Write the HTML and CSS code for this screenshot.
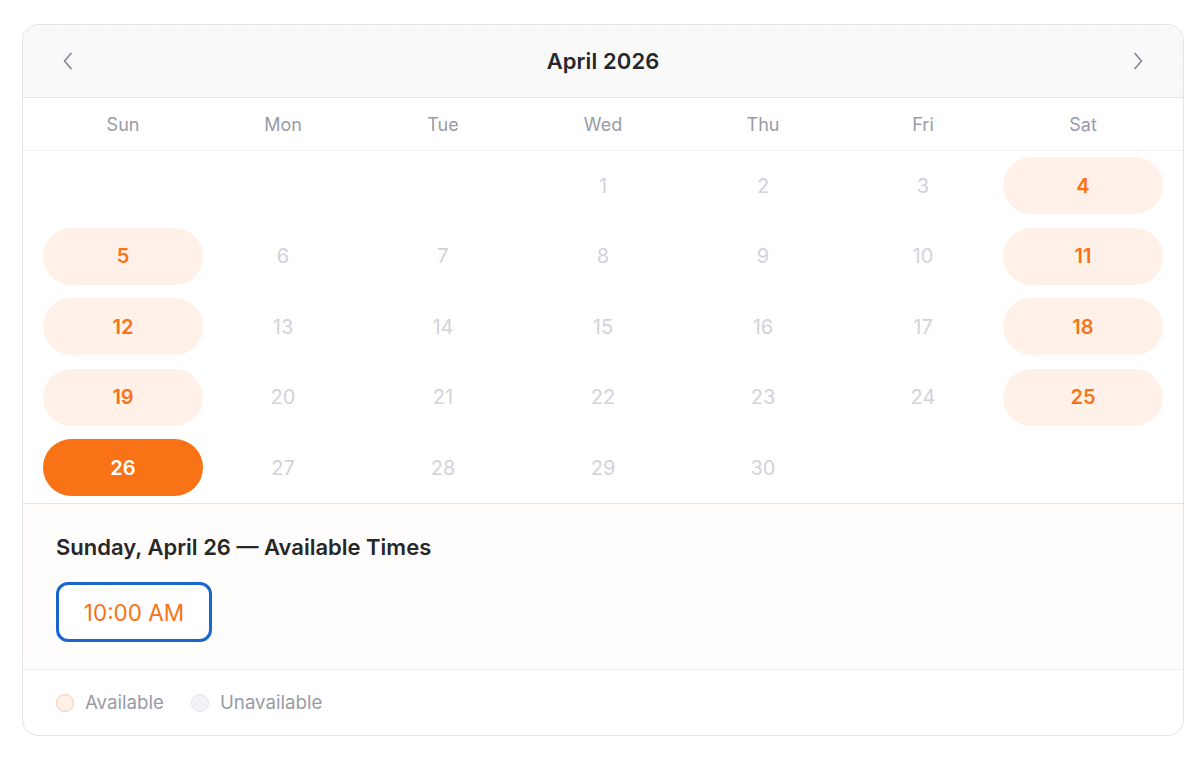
FILE: index.html
```html
<!DOCTYPE html>
<html lang="en">
<head>
<meta charset="utf-8">
<title>April 2026</title>
<link rel="stylesheet" href="styles.css">
</head>
<body>
<div class="card">
  <div class="header">
    <button class="nav" aria-label="Previous month">
      <svg width="16" height="20" viewBox="0 0 16 20"><path d="M11 2.5 L4.5 10 L11 17.5" fill="none" stroke="#8b8b96" stroke-width="1.8" stroke-linecap="round" stroke-linejoin="round"/></svg>
    </button>
    <div class="title">April 2026</div>
    <button class="nav" aria-label="Next month">
      <svg width="16" height="20" viewBox="0 0 16 20"><path d="M5 2.5 L11.5 10 L5 17.5" fill="none" stroke="#8b8b96" stroke-width="1.8" stroke-linecap="round" stroke-linejoin="round"/></svg>
    </button>
  </div>
  <div class="weekdays">
    <div>Sun</div><div>Mon</div><div>Tue</div><div>Wed</div><div>Thu</div><div>Fri</div><div>Sat</div>
  </div>
  <div class="grid">
    <div class="day empty"></div><div class="day empty"></div><div class="day empty"></div>
    <div class="day off">1</div><div class="day off">2</div><div class="day off">3</div><div class="day avail">4</div>
    <div class="day avail">5</div><div class="day off">6</div><div class="day off">7</div><div class="day off">8</div><div class="day off">9</div><div class="day off">10</div><div class="day avail">11</div>
    <div class="day avail">12</div><div class="day off">13</div><div class="day off">14</div><div class="day off">15</div><div class="day off">16</div><div class="day off">17</div><div class="day avail">18</div>
    <div class="day avail">19</div><div class="day off">20</div><div class="day off">21</div><div class="day off">22</div><div class="day off">23</div><div class="day off">24</div><div class="day avail">25</div>
    <div class="day selected">26</div><div class="day off">27</div><div class="day off">28</div><div class="day off">29</div><div class="day off">30</div><div class="day empty"></div><div class="day empty"></div>
  </div>
  <div class="times">
    <h2 class="times-title">Sunday, April 26 — Available Times</h2>
    <div class="slots">
      <button class="slot">10:00 AM</button>
    </div>
  </div>
  <div class="legend">
    <span class="legend-item"><span class="dot dot-avail"></span>Available</span>
    <span class="legend-item"><span class="dot dot-off"></span>Unavailable</span>
  </div>
</div>
</body>
</html>
```
FILE: styles.css
```css
* { box-sizing: border-box; }
html, body { margin: 0; background: #ffffff; }
body {
  padding: 24px 16px 0 22px;
  font-family: Inter, "Noto Sans", "Liberation Sans", sans-serif;
  color: #27272a;
}
.card {
  width: 1162px;
  border: 1px solid #e4e4e8;
  border-radius: 16px;
  overflow: hidden;
  background: #fff;
}
.header {
  height: 73px;
  display: flex;
  align-items: center;
  justify-content: space-between;
  padding: 0 33px;
  border-bottom: 1px solid #e4e4e8;
  background-color: #f9f9fa;
  background-image: radial-gradient(circle, #f2f2f4 0.7px, transparent 1.1px);
  background-size: 12px 12px;
}
.nav {
  width: 24px; height: 24px;
  border: 0; background: none; padding: 0;
  display: flex; align-items: center; justify-content: center;
}
.title {
  font-size: 22px;
  font-weight: 600;
  color: #27272a;
  letter-spacing: 0.1px;
}
.weekdays {
  display: grid;
  grid-template-columns: repeat(7, 160px);
  padding: 0 20px;
  height: 53px;
  align-items: center;
  border-bottom: 1px solid #f0f0f3;
  font-size: 18px;
  color: #9a9aa6;
  text-align: center;
}
.grid {
  display: grid;
  grid-template-columns: repeat(7, 160px);
  grid-auto-rows: 57px;
  row-gap: 13.5px;
  padding: 6px 20px 7px;
  border-bottom: 1px solid #e4e4e8;
}
.day {
  display: flex;
  align-items: center;
  justify-content: center;
  font-size: 20px;
  border-radius: 29px;
}
.day.off { color: #d2d2da; }
.day.avail { background: #fff1e7; color: #f97316; font-weight: 600; }
.day.selected { background: #f97316; color: #fff; font-weight: 600; }
.times {
  background: #fffdfb;
  padding: 29px 33px 27px;
  border-bottom: 1px solid #f0f0f3;
}
.times-title {
  margin: 0 0 21px;
  font-size: 22px;
  line-height: 28px;
  font-weight: 600;
  color: #27272a;
}
.slots { display: flex; gap: 12px; }
.slot {
  width: 156px;
  height: 60px;
  border: 3px solid #1a66d0;
  border-radius: 12px;
  background: #fff;
  color: #f97316;
  font-family: inherit;
  font-size: 22.5px;
}
.legend {
  height: 65px;
  display: flex;
  align-items: center;
  gap: 27px;
  padding: 0 33px;
  font-size: 18.7px;
  color: #9a9aa6;
}
.legend-item { display: flex; align-items: center; gap: 11px; }
.dot { width: 18px; height: 18px; border-radius: 50%; display: inline-block; }
.dot-avail { background: #fff1e7; border: 1px solid #fbc9a4; }
.dot-off { background: #f3f3f5; border: 1px solid #e4e4e8; }
```
